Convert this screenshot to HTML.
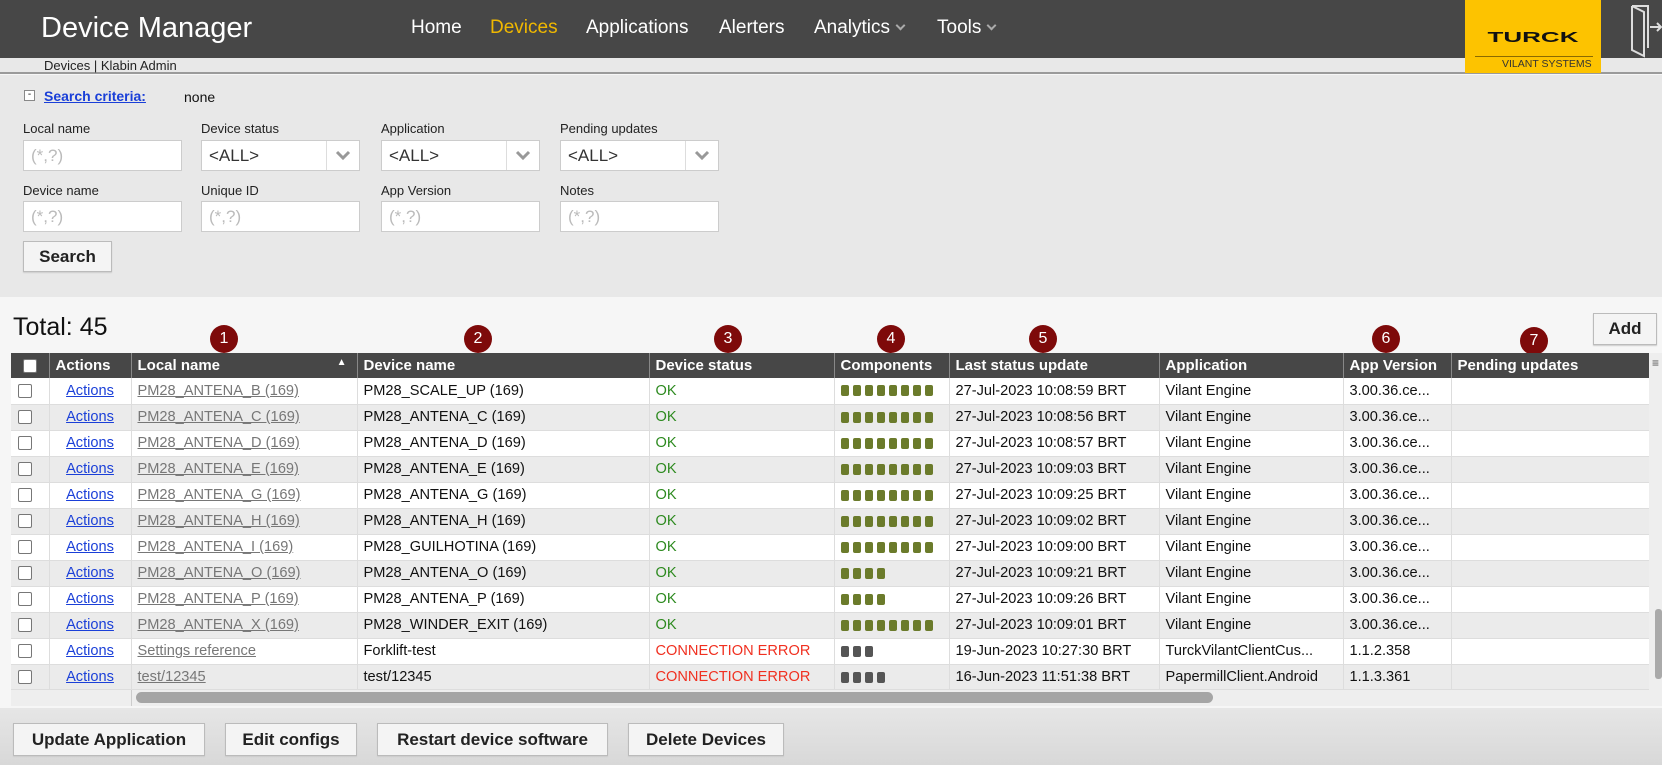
<!DOCTYPE html>
<html><head><meta charset="utf-8"><style>
*{box-sizing:border-box;margin:0;padding:0}
body{width:1662px;height:765px;overflow:hidden;font-family:"Liberation Sans",Arial,sans-serif;background:#f6f6f6;position:relative;color:#111}
.abs{position:absolute}
#hdr{left:0;top:0;width:1662px;height:58px;background:#474747}
#title{left:41px;top:12px;color:#fff;font-size:29px}
.nav{top:17px;color:#fff;font-size:19px}
.car{display:inline-block;width:7px;height:7px;border-right:2px solid #aaa;border-bottom:2px solid #aaa;transform:rotate(45deg);margin-left:7px;position:relative;top:-4px}
#sub{left:0;top:58px;width:1662px;height:16px;background:#e8e8e8;border-bottom:2px solid #9a9a9a}
#sub span{position:absolute;left:44px;top:0;font-size:13px;color:#222}
#logo{left:1465px;top:0;width:136px;height:73px;background:#fdc300}
#search{left:0;top:75px;width:1662px;height:222px;background:#e8e8e8}
.lbl{font-size:13px;color:#222}
.inp{width:159px;height:31px;background:#fff;border:1px solid #ccc;font-size:17px;color:#bbb;padding:5px 7px}
.sel{color:#333}
.sel:after{content:"";position:absolute;right:0;top:0;width:32px;height:29px;border-left:1px solid #ddd}
.btn{background:#f4f4f4;border:1px solid #bbb;font-weight:bold;font-size:17px;color:#222;text-align:center;box-shadow:0 1px 1px #ccc}
table{border-collapse:collapse;table-layout:fixed;position:absolute;left:11px;top:353px;width:1638px;font-size:14.6px}
th{background:#474747;color:#fff;height:25px;text-align:left;padding-left:6px;border-right:1px solid #888;font-size:15px}
td{height:26px;padding-left:6px;border-right:1px solid #ddd;border-bottom:1px solid #ddd;white-space:nowrap;overflow:hidden}
tr:nth-child(odd) td{background:#ebebeb}
tr:nth-child(even) td{background:#fff}
.cb{display:inline-block;width:14px;height:14px;border:1px solid #777;border-radius:2px;background:#fff;vertical-align:middle}
.ac{color:#1a3fd8;text-decoration:underline;text-align:center;padding-left:0}
.ln{color:#777;text-decoration:underline}
.ok{color:#2d8a1f}
.er{color:#f03020}
.p{display:inline-block;width:8px;height:11px;background:#6b7b2b;border-radius:2px;margin-right:4px;vertical-align:middle}
.g{background:#555}
.badge{width:28px;height:28px;border-radius:50%;background:#7e0a0a;color:#fff;font-size:16px;text-align:center;line-height:28px;top:325px}
.chev{position:absolute;right:8px;top:9px}
</style></head><body>
<div id="hdr" class="abs"></div>
<div id="title" class="abs">Device Manager</div>
<div class="abs nav" style="left:411px">Home</div>
<div class="abs nav" style="left:490px;color:#f0b800">Devices</div>
<div class="abs nav" style="left:586px">Applications</div>
<div class="abs nav" style="left:719px">Alerters</div>
<div class="abs nav" style="left:814px">Analytics<span class="car"></span></div>
<div class="abs nav" style="left:937px">Tools<span class="car"></span></div>
<div id="sub" class="abs"><span>Devices | Klabin Admin</span></div>
<div id="logo" class="abs">
<div class="abs" style="left:9px;top:22px;width:118px;text-align:center;font:900 26px 'Liberation Sans';letter-spacing:0px;color:#111;transform:scaleY(.55)">TURCK</div>
<div class="abs" style="left:10px;top:56px;width:118px;border-top:1px solid #8a6a00"></div>
<div class="abs" style="left:37px;top:58px;font-size:10.5px;color:#333">VILANT SYSTEMS</div>
</div>
<svg class="abs" style="left:1628px;top:2px" width="34" height="56" viewBox="0 0 34 56"><path d="M4 4 L20 4 L20 46 M4 4 L4 48 L16 54 L16 10 L4 4" fill="none" stroke="#ddd" stroke-width="2"/><path d="M22 25 L33 25 M29 21 L33 25 L29 29" fill="none" stroke="#ddd" stroke-width="2"/></svg>
<div id="search" class="abs"></div>
<div class="abs" style="left:24px;top:90px;width:11px;height:11px;border:1px solid #888;background:#fff;font-size:10px;line-height:8px;text-align:center">-</div>
<div class="abs" style="left:44px;top:88px;font-size:14px;font-weight:bold;color:#1a3fd8;text-decoration:underline">Search criteria:</div>
<div class="abs" style="left:184px;top:89px;font-size:14px">none</div>
<div class="abs lbl" style="left:23px;top:121px">Local name</div>
<div class="abs lbl" style="left:201px;top:121px">Device status</div>
<div class="abs lbl" style="left:381px;top:121px">Application</div>
<div class="abs lbl" style="left:560px;top:121px">Pending updates</div>
<div class="abs inp" style="left:23px;top:140px">(*,?)</div>
<div class="abs inp sel" style="left:201px;top:140px">&lt;ALL&gt;<svg class="chev" width="16" height="11" viewBox="0 0 16 11"><path d="M2 2 L8 8 L14 2" fill="none" stroke="#999" stroke-width="3"/></svg></div>
<div class="abs inp sel" style="left:381px;top:140px">&lt;ALL&gt;<svg class="chev" width="16" height="11" viewBox="0 0 16 11"><path d="M2 2 L8 8 L14 2" fill="none" stroke="#999" stroke-width="3"/></svg></div>
<div class="abs inp sel" style="left:560px;top:140px">&lt;ALL&gt;<svg class="chev" width="16" height="11" viewBox="0 0 16 11"><path d="M2 2 L8 8 L14 2" fill="none" stroke="#999" stroke-width="3"/></svg></div>
<div class="abs lbl" style="left:23px;top:183px">Device name</div>
<div class="abs lbl" style="left:201px;top:183px">Unique ID</div>
<div class="abs lbl" style="left:381px;top:183px">App Version</div>
<div class="abs lbl" style="left:560px;top:183px">Notes</div>
<div class="abs inp" style="left:23px;top:201px">(*,?)</div>
<div class="abs inp" style="left:201px;top:201px">(*,?)</div>
<div class="abs inp" style="left:381px;top:201px">(*,?)</div>
<div class="abs inp" style="left:560px;top:201px">(*,?)</div>
<div class="abs btn" style="left:23px;top:241px;width:89px;height:31px;line-height:29px">Search</div>
<div class="abs" style="left:13px;top:313px;font-size:25px">Total: 45</div>
<div class="abs btn" style="left:1593px;top:313px;width:64px;height:32px;line-height:30px">Add</div>
<div class="abs badge" style="left:210px">1</div>
<div class="abs badge" style="left:464px">2</div>
<div class="abs badge" style="left:714px">3</div>
<div class="abs badge" style="left:877px">4</div>
<div class="abs badge" style="left:1029px">5</div>
<div class="abs badge" style="left:1372px">6</div>
<div class="abs badge" style="left:1520px;top:327px">7</div>
<table>
<colgroup><col style="width:38px"><col style="width:82px"><col style="width:226px"><col style="width:292px"><col style="width:185px"><col style="width:115px"><col style="width:210px"><col style="width:184px"><col style="width:108px"><col style="width:198px"></colgroup>
<tr><th style="text-align:center;padding:0"><span class="cb"></span></th><th>Actions</th><th>Local name<span style="float:right;margin-right:10px;font-size:10px">&#9650;</span></th><th>Device name</th><th>Device status</th><th>Components</th><th>Last status update</th><th>Application</th><th>App Version</th><th>Pending updates</th></tr>
<tr><td style="padding-left:7px"><span class="cb"></span></td><td class="ac">Actions</td><td class="ln">PM28_ANTENA_B (169)</td><td>PM28_SCALE_UP (169)</td><td class="ok">OK</td><td><i class="p"></i><i class="p"></i><i class="p"></i><i class="p"></i><i class="p"></i><i class="p"></i><i class="p"></i><i class="p"></i></td><td>27-Jul-2023 10:08:59 BRT</td><td>Vilant Engine</td><td>3.00.36.ce...</td><td></td></tr>
<tr><td style="padding-left:7px"><span class="cb"></span></td><td class="ac">Actions</td><td class="ln">PM28_ANTENA_C (169)</td><td>PM28_ANTENA_C (169)</td><td class="ok">OK</td><td><i class="p"></i><i class="p"></i><i class="p"></i><i class="p"></i><i class="p"></i><i class="p"></i><i class="p"></i><i class="p"></i></td><td>27-Jul-2023 10:08:56 BRT</td><td>Vilant Engine</td><td>3.00.36.ce...</td><td></td></tr>
<tr><td style="padding-left:7px"><span class="cb"></span></td><td class="ac">Actions</td><td class="ln">PM28_ANTENA_D (169)</td><td>PM28_ANTENA_D (169)</td><td class="ok">OK</td><td><i class="p"></i><i class="p"></i><i class="p"></i><i class="p"></i><i class="p"></i><i class="p"></i><i class="p"></i><i class="p"></i></td><td>27-Jul-2023 10:08:57 BRT</td><td>Vilant Engine</td><td>3.00.36.ce...</td><td></td></tr>
<tr><td style="padding-left:7px"><span class="cb"></span></td><td class="ac">Actions</td><td class="ln">PM28_ANTENA_E (169)</td><td>PM28_ANTENA_E (169)</td><td class="ok">OK</td><td><i class="p"></i><i class="p"></i><i class="p"></i><i class="p"></i><i class="p"></i><i class="p"></i><i class="p"></i><i class="p"></i></td><td>27-Jul-2023 10:09:03 BRT</td><td>Vilant Engine</td><td>3.00.36.ce...</td><td></td></tr>
<tr><td style="padding-left:7px"><span class="cb"></span></td><td class="ac">Actions</td><td class="ln">PM28_ANTENA_G (169)</td><td>PM28_ANTENA_G (169)</td><td class="ok">OK</td><td><i class="p"></i><i class="p"></i><i class="p"></i><i class="p"></i><i class="p"></i><i class="p"></i><i class="p"></i><i class="p"></i></td><td>27-Jul-2023 10:09:25 BRT</td><td>Vilant Engine</td><td>3.00.36.ce...</td><td></td></tr>
<tr><td style="padding-left:7px"><span class="cb"></span></td><td class="ac">Actions</td><td class="ln">PM28_ANTENA_H (169)</td><td>PM28_ANTENA_H (169)</td><td class="ok">OK</td><td><i class="p"></i><i class="p"></i><i class="p"></i><i class="p"></i><i class="p"></i><i class="p"></i><i class="p"></i><i class="p"></i></td><td>27-Jul-2023 10:09:02 BRT</td><td>Vilant Engine</td><td>3.00.36.ce...</td><td></td></tr>
<tr><td style="padding-left:7px"><span class="cb"></span></td><td class="ac">Actions</td><td class="ln">PM28_ANTENA_I (169)</td><td>PM28_GUILHOTINA (169)</td><td class="ok">OK</td><td><i class="p"></i><i class="p"></i><i class="p"></i><i class="p"></i><i class="p"></i><i class="p"></i><i class="p"></i><i class="p"></i></td><td>27-Jul-2023 10:09:00 BRT</td><td>Vilant Engine</td><td>3.00.36.ce...</td><td></td></tr>
<tr><td style="padding-left:7px"><span class="cb"></span></td><td class="ac">Actions</td><td class="ln">PM28_ANTENA_O (169)</td><td>PM28_ANTENA_O (169)</td><td class="ok">OK</td><td><i class="p"></i><i class="p"></i><i class="p"></i><i class="p"></i></td><td>27-Jul-2023 10:09:21 BRT</td><td>Vilant Engine</td><td>3.00.36.ce...</td><td></td></tr>
<tr><td style="padding-left:7px"><span class="cb"></span></td><td class="ac">Actions</td><td class="ln">PM28_ANTENA_P (169)</td><td>PM28_ANTENA_P (169)</td><td class="ok">OK</td><td><i class="p"></i><i class="p"></i><i class="p"></i><i class="p"></i></td><td>27-Jul-2023 10:09:26 BRT</td><td>Vilant Engine</td><td>3.00.36.ce...</td><td></td></tr>
<tr><td style="padding-left:7px"><span class="cb"></span></td><td class="ac">Actions</td><td class="ln">PM28_ANTENA_X (169)</td><td>PM28_WINDER_EXIT (169)</td><td class="ok">OK</td><td><i class="p"></i><i class="p"></i><i class="p"></i><i class="p"></i><i class="p"></i><i class="p"></i><i class="p"></i><i class="p"></i></td><td>27-Jul-2023 10:09:01 BRT</td><td>Vilant Engine</td><td>3.00.36.ce...</td><td></td></tr>
<tr><td style="padding-left:7px"><span class="cb"></span></td><td class="ac">Actions</td><td class="ln">Settings reference</td><td>Forklift-test</td><td class="er">CONNECTION ERROR</td><td><i class="p g"></i><i class="p g"></i><i class="p g"></i></td><td>19-Jun-2023 10:27:30 BRT</td><td>TurckVilantClientCus...</td><td>1.1.2.358</td><td></td></tr>
<tr><td style="padding-left:7px"><span class="cb"></span></td><td class="ac">Actions</td><td class="ln">test/12345</td><td>test/12345</td><td class="er">CONNECTION ERROR</td><td><i class="p g"></i><i class="p g"></i><i class="p g"></i><i class="p g"></i></td><td>16-Jun-2023 11:51:38 BRT</td><td>PapermillClient.Android</td><td>1.1.3.361</td><td></td></tr>
</table>
<div class="abs" style="left:1649px;top:353px;width:13px;height:353px;background:#eee"></div>
<div class="abs" style="left:1652px;top:356px;font-size:12px;color:#555">&#8801;</div>
<div class="abs" style="left:1655px;top:609px;width:7px;height:70px;background:#aaa;border-radius:3px"></div>
<div class="abs" style="left:11px;top:689px;width:1638px;height:17px;background:#eee;border-top:1px solid #ddd"></div>
<div class="abs" style="left:131px;top:690px;width:1px;height:16px;border-left:1px solid #ccc"></div>
<div class="abs" style="left:136px;top:692px;width:1077px;height:11px;background:#a5a5a5;border-radius:6px"></div>
<div class="abs" style="left:0;top:708px;width:1662px;height:57px;background:linear-gradient(#e6e6e6,#d8d8d8)"></div>
<div class="abs btn" style="left:13px;top:723px;width:192px;height:33px;line-height:31px">Update Application</div>
<div class="abs btn" style="left:225px;top:723px;width:132px;height:33px;line-height:31px">Edit configs</div>
<div class="abs btn" style="left:377px;top:723px;width:231px;height:33px;line-height:31px">Restart device software</div>
<div class="abs btn" style="left:628px;top:723px;width:156px;height:33px;line-height:31px">Delete Devices</div>
</body></html>
